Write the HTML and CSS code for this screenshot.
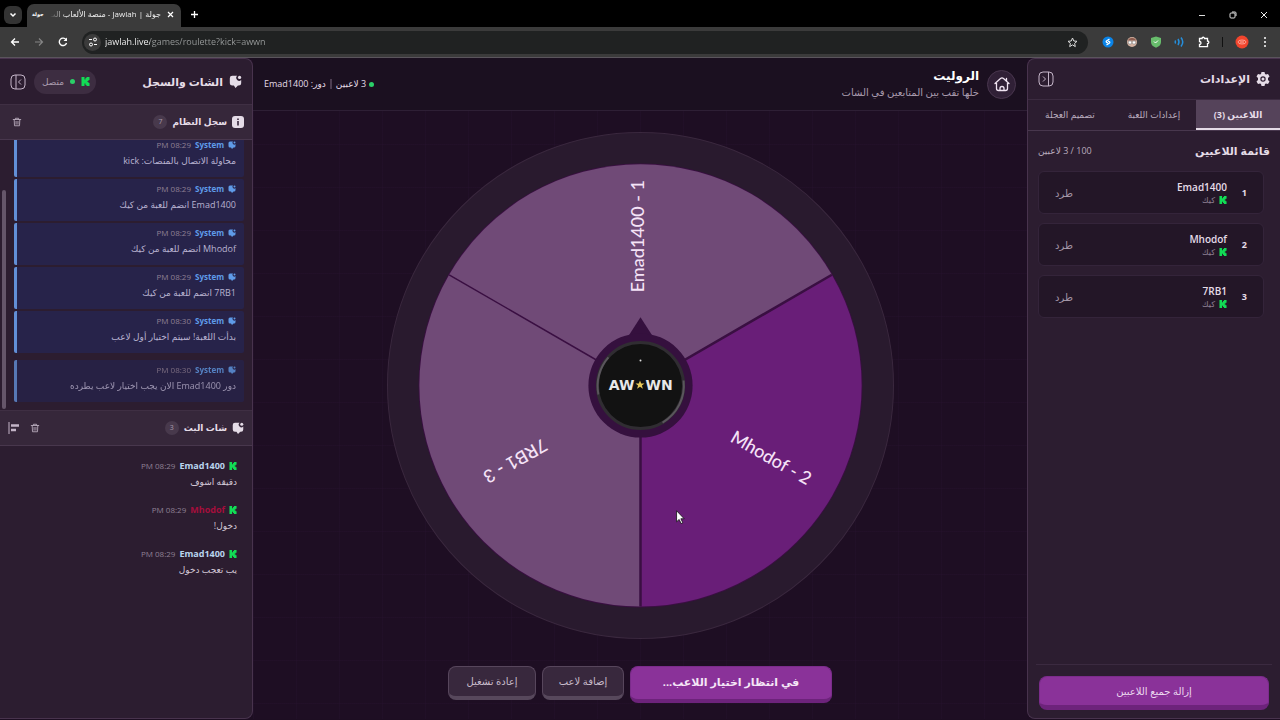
FILE: index.html
```html
<!DOCTYPE html>
<html lang="ar" dir="rtl">
<head>
	<meta charset="utf-8">
	<meta name="viewport" content="width=device-width, initial-scale=1.0">
	<title>جولة | Jawlah - منصة الألعاب</title>
	<link rel="stylesheet" href="styles.css">
</head>
<body>
	<svg class="defs" aria-hidden="true">
		<symbol id="kick" viewBox="0 0 9 9"><path fill="#12dc55" d="M.5 0h3v2.500h1V1h1V0h3v3h-1v1h-1v1h1v1h1v3h-3V8h-1V6.500h-1V9h-3z"/></symbol>
		<symbol id="chat" viewBox="0 0 16 16"><path fill="currentColor" d="M4 1h6a3.500 3.500 0 0 0 5 5v4a3 3 0 0 1-3 3h-1l-3 3-2-3H4a3 3 0 0 1-3-3V4a3 3 0 0 1 3-3z"/><circle cx="13" cy="3" r="2" fill="currentColor"/></symbol>
		<symbol id="trash" viewBox="0 0 16 16"><path fill="none" stroke="currentColor" stroke-width="1.4" stroke-linecap="round" stroke-linejoin="round" d="M2 4h12M5.500 4V2h5v2M3.500 4l.5 10h8l.5-10M6.500 7v4.500M9.500 7v4.500"/></symbol>
	</svg>

	<!-- browser -->
	<div class="browser" dir="ltr">
		<div class="tabbar">
			<button class="tab-search" aria-label="Search tabs"><svg width="8" height="8" viewBox="0 0 8 8"><path d="M1.500 2.500L4 5l2.500-2.500" fill="none" stroke="#fff" stroke-width="1.500"/></svg></button>
			<div class="tab">
				<span class="favicon">جولة</span>
				<span class="tab-title" dir="rtl">جولة | Jawlah - منصة الألعاب الت</span>
				<button class="plain" aria-label="Close tab"><svg width="7" height="7" viewBox="0 0 7 7"><path d="M1 1l5 5M6 1L1 6" stroke="#fff" stroke-width="1.200"/></svg></button>
			</div>
			<button class="plain new-tab" aria-label="New tab"><svg width="9" height="9" viewBox="0 0 9 9"><path d="M4.500 1v7M1 4.500h7" stroke="#fff" stroke-width="1.300"/></svg></button>
			<div class="window-buttons">
				<button class="plain" aria-label="Minimize"><svg width="8" height="8" viewBox="0 0 8 8"><path d="M1 4.500h6" stroke="#ddd"/></svg></button>
				<button class="plain" aria-label="Restore"><svg width="8" height="8" viewBox="0 0 8 8"><rect x="1" y="2" width="5" height="5" rx="1" fill="none" stroke="#ddd"/><path d="M3 1h3a1 1 0 0 1 1 1v3" fill="none" stroke="#ddd"/></svg></button>
				<button class="plain" aria-label="Close"><svg width="8" height="8" viewBox="0 0 8 8"><path d="M1 1l6 6M7 1L1 7" stroke="#eee"/></svg></button>
			</div>
		</div>
		<div class="toolbar">
			<button class="plain" aria-label="Back"><svg width="10" height="10" viewBox="0 0 10 10"><path d="M9 5H1.500M5 1.500L1.500 5 5 8.500" fill="none" stroke="#fff" stroke-width="1.300"/></svg></button>
			<button class="plain" aria-label="Forward"><svg width="10" height="10" viewBox="0 0 10 10"><path d="M1 5h7.500M5 1.500L8.500 5 5 8.500" fill="none" stroke="#858585" stroke-width="1.200"/></svg></button>
			<button class="plain" aria-label="Reload"><svg width="10" height="10" viewBox="0 0 10 10"><path d="M8.500 6A3.700 3.700 0 1 1 8 2.700" fill="none" stroke="#fff" stroke-width="1.400"/><path d="M9 .5V4H5.500z" fill="#fff"/></svg></button>
			<div class="address">
				<span class="site-info"><svg width="10" height="10" viewBox="0 0 10 10"><path d="M1 2.500h3M6 7.500h3" stroke="#fff" stroke-width="1.200"/><circle cx="7" cy="2.500" r="1.500" fill="none" stroke="#fff"/><circle cx="3" cy="7.500" r="1.500" fill="none" stroke="#fff"/></svg></span>
				<input class="url" type="text" aria-label="Address" value="jawlah.live/games/roulette?kick=awwn">
				<button class="plain" aria-label="Bookmark"><svg width="11" height="11" viewBox="0 0 11 11"><path d="M5.500 1l1.300 3 3.200.3-2.400 2.100.7 3.200-2.800-1.700-2.800 1.700.7-3.200L1 4.300 4.200 4z" fill="none" stroke="#ddd"/></svg></button>
			</div>
			<div class="extensions">
				<svg width="12" height="12" viewBox="0 0 12 12"><circle cx="6" cy="6" r="5.500" fill="#0a84e8"/><path d="M7.500 3L4.500 5c-1 1 .5 2 1.500 1.500M4.500 9l3-2c1-1-.5-2-1.500-1.500" fill="none" stroke="#fff" stroke-width="1.200"/></svg>
				<svg width="12" height="12" viewBox="0 0 12 12"><circle cx="6" cy="6" r="5" fill="#d5b3a2"/><path d="M1.500 4.500a5 5 0 0 1 9 0z" fill="#8d5d50"/><circle cx="4" cy="6.500" r="1.700" fill="#fff" stroke="#777" stroke-width=".6"/><circle cx="8" cy="6.500" r="1.700" fill="#fff" stroke="#777" stroke-width=".6"/></svg>
				<svg width="12" height="12" viewBox="0 0 12 12"><path d="M6 .5l5 1.500v4c0 3-2.500 4.800-5 5.700C3.500 10.800 1 9 1 6V2z" fill="#68bd6c"/><path d="M4 5.500L5.500 7 8 4.500" fill="none" stroke="#fff"/></svg>
				<svg width="12" height="12" viewBox="0 0 12 12"><path d="M1 4.500q1 1.500 0 3M4 3q2 3 0 6M7 1.500q3.500 4.500 0 9" fill="none" stroke="#258fdc" stroke-width="1.500"/></svg>
				<svg width="12" height="12" viewBox="0 0 12 12"><path d="M1.500 2.500H4a1.200 1.200 0 0 1 2.500 0h3V5a1.300 1.300 0 0 1 0 2.700v3h-8V8.500a1.500 1.500 0 0 0 0-3z" fill="none" stroke="#fff" stroke-width="1.300"/></svg>
				<span class="divider"></span>
				<svg width="14" height="14" viewBox="0 0 14 14"><circle cx="7" cy="7" r="6.500" fill="#f2452d"/><ellipse cx="7" cy="7" rx="4" ry="2" fill="none" stroke="#ffb6aa" stroke-width=".8"/><path d="M5 7h4" stroke="#ffcbc2" stroke-width=".8"/></svg>
				<button class="plain menu" aria-label="Menu"><svg width="4" height="12" viewBox="0 0 4 12"><g fill="#fff"><circle cx="2" cy="2" r="1"/><circle cx="2" cy="6" r="1"/><circle cx="2" cy="10" r="1"/></g></svg></button>
			</div>
		</div>
	</div>

	<div class="app">
		<!-- settings -->
		<aside class="panel settings">
			<div class="panel-head">
				<h2><svg width="14" height="14" viewBox="0 0 14 14"><path fill="currentColor" fill-rule="evenodd" d="M5.500 0h3l.5 2 1 .6 2-.6 1.500 2.500L12 6v2l1.500 1.500L12 12l-2-.6-1 .6-.5 2h-3L5 12l-1-.6-2 .6L.5 9.500 2 8V6L.5 4.500 2 2l2 .6L5 2zM7 4.300a2.700 2.700 0 1 0 0 5.400 2.700 2.700 0 0 0 0-5.400z"/><circle cx="7" cy="7" r="1.500" fill="currentColor"/></svg>الإعدادات</h2>
				<button class="plain" aria-label="طي الإعدادات"><svg width="16" height="16" viewBox="0 0 16 16" fill="none" stroke="#c4b5c8"><rect x="1" y="1" width="14" height="14" rx="4"/><path d="M10.500 1v14M5 5.500L7.500 8 5 10.500"/></svg></button>
			</div>
			<nav class="tabs">
				<button class="active">اللاعبين (3)</button>
				<button>إعدادات اللعبة</button>
				<button>تصميم العجلة</button>
			</nav>
			<div class="players">
				<div class="players-head">
					<h3>قائمة اللاعبين</h3>
					<span>100 / 3 لاعبين</span>
				</div>
				<ol>
					<li><b>1</b><div><strong>Emad1400</strong><small><svg><use href="#kick"/></svg>كيك</small></div><button class="plain">طرد</button></li>
					<li><b>2</b><div><strong>Mhodof</strong><small><svg><use href="#kick"/></svg>كيك</small></div><button class="plain">طرد</button></li>
					<li><b>3</b><div><strong>7RB1</strong><small><svg><use href="#kick"/></svg>كيك</small></div><button class="plain">طرد</button></li>
				</ol>
			</div>
			<div class="panel-foot">
				<button class="remove-all">إزالة جميع اللاعبين</button>
			</div>
		</aside>

		<!-- game -->
		<main class="game">
			<header class="game-head">
				<a class="home" href="#" aria-label="الرئيسية"><svg width="16" height="16" viewBox="0 0 16 16" fill="none" stroke="#f0e4f2" stroke-width="1.300" stroke-linejoin="round" stroke-linecap="round"><path d="M1 7.500L6.500 2.500q1.500-1.300 3 0L15 7.500M12.500 5V2.500M2.500 7v5.500a2 2 0 0 0 2 2h7a2 2 0 0 0 2-2V7M6 14.500v-2a2 2 0 0 1 4 0v2"/></svg></a>
				<div class="game-name">
					<h1>الروليت</h1>
					<p>خلها تقب بين المتابعين في الشات</p>
				</div>
				<div class="game-status">
					<span class="dot"></span>
					<span>3 لاعبين</span>
					<span class="bar"></span>
					<span>دور: Emad1400</span>
				</div>
			</header>
			<div class="stage">
				<svg class="wheel" viewBox="0 0 508 508" direction="ltr">
					<circle cx="254" cy="254" r="252.500" fill="#291a2e" stroke="#3a283e"/>
					<circle cx="254" cy="254" r="221.500" fill="#3a0f42"/>
					<path fill="#704a77" d="M254 254L63 143.500A220.500 220.500 0 0 1 445 143.500z"/>
					<path fill="#691e78" d="M254 254L445 143.500A220.500 220.500 0 0 1 254 474.500z"/>
					<path fill="#704a77" d="M254 254V474.500A220.500 220.500 0 0 1 63 143.500z"/>
					<g stroke="#3a0f42" stroke-width="2.500">
						<path d="M254 254L445 143.500M254 254V474.500"/>
						<path d="M254 254L63 143.500" stroke-width="1.500"/>
					</g>
					<g class="names">
						<text transform="translate(254 254) rotate(-90)" x="149" y="-1">Emad1400 - 1</text>
						<text transform="translate(254 254) rotate(30)" x="149" y="-1">Mhodof - 2</text>
						<text transform="translate(254 254) rotate(150)" x="146" y="-1">7RB1 - 3</text>
					</g>
					<path fill="#35103e" d="M254 186l13 20h-26z"/>
					<circle cx="254" cy="254" r="52" fill="#35103e"/>
					<circle cx="254" cy="254" r="43" fill="#121212" stroke="#302d32" stroke-width="3"/>
					<path d="M222 226A43 43 0 0 0 212 263M297 249A43 43 0 0 1 276 291" fill="none" stroke="#5a565c" stroke-width="2"/>
					<circle cx="254" cy="229" r="1" fill="#ddd"/>
					<g class="logo">
						<text x="248" y="258" text-anchor="end">AW</text>
						<text x="259" y="258">WN</text>
					</g>
					<path fill="#e6c85a" d="M253.500 249l1.200 3h3.300l-2.600 2 1 3.200-2.900-2-2.900 2 1-3.200-2.600-2h3.300z"/>
					<path fill="#fff" stroke="#111" stroke-width=".8" d="M290 379v11l2.600-2.300 1.900 4.100 1.700-.8-1.900-4h3.300z"/>
				</svg>
			</div>
			<div class="actions">
				<button class="primary">في انتظار اختيار اللاعب...</button>
				<button>إضافة لاعب</button>
				<button>إعادة تشغيل</button>
			</div>
		</main>

		<!-- chat and log -->
		<aside class="panel chat">
			<div class="panel-head">
				<h2><svg width="13" height="13"><use href="#chat"/></svg>الشات والسجل</h2>
				<span class="connected"><svg width="9" height="9"><use href="#kick"/></svg><i class="dot"></i>متصل</span>
				<button class="plain" aria-label="طي الشات"><svg width="16" height="16" viewBox="0 0 16 16" fill="none" stroke="#c4b5c8"><rect x="1" y="1" width="14" height="14" rx="4"/><path d="M6 1v14M11 5.500L8.500 8l2.500 2.500"/></svg></button>
			</div>
			<div class="section-head">
				<svg width="12" height="12" viewBox="0 0 12 12"><rect width="12" height="12" rx="3" fill="#e5dce7"/><path d="M6 2.500v1.500M6 5v4.500" stroke="#35263a" stroke-width="1.600"/></svg>
				<h3>سجل النظام</h3>
				<span class="count">7</span>
				<div class="tools">
					<button class="plain" aria-label="مسح السجل"><svg width="10" height="10"><use href="#trash"/></svg></button>
				</div>
			</div>
			<div class="log">
				<article><header><svg><use href="#chat"/></svg><b>System</b><time>08:29 PM</time></header><p>محاولة الاتصال بالمنصات: kick</p></article>
				<article><header><svg><use href="#chat"/></svg><b>System</b><time>08:29 PM</time></header><p>Emad1400 انضم للعبة من كيك</p></article>
				<article><header><svg><use href="#chat"/></svg><b>System</b><time>08:29 PM</time></header><p>Mhodof انضم للعبة من كيك</p></article>
				<article><header><svg><use href="#chat"/></svg><b>System</b><time>08:29 PM</time></header><p>7RB1 انضم للعبة من كيك</p></article>
				<article><header><svg><use href="#chat"/></svg><b>System</b><time>08:30 PM</time></header><p>بدأت اللعبة! سيتم اختيار أول لاعب</p></article>
				<article class="entering"><header><svg><use href="#chat"/></svg><b>System</b><time>08:30 PM</time></header><p>دور Emad1400 الان يجب اختيار لاعب يطرده</p></article>
				<div class="scroll-thumb"></div>
			</div>
			<div class="section-head">
				<svg width="12" height="12"><use href="#chat"/></svg>
				<h3>شات البث</h3>
				<span class="count">3</span>
				<div class="tools">
					<button class="plain" aria-label="مسح الشات"><svg width="10" height="10"><use href="#trash"/></svg></button>
					<button class="plain" aria-label="محاذاة"><svg width="12" height="12" viewBox="0 0 12 12"><path d="M1 0v12" stroke="#c4b5c8"/><path d="M3 3.500h8M3 8h5" stroke="#c4b5c8" stroke-width="2.500"/></svg></button>
				</div>
			</div>
			<div class="messages">
				<article><header><svg><use href="#kick"/></svg><b>Emad1400</b><time>08:29 PM</time></header><p>دقيقه اشوف</p></article>
				<article><header><svg><use href="#kick"/></svg><b class="red">Mhodof</b><time>08:29 PM</time></header><p>دخول!</p></article>
				<article><header><svg><use href="#kick"/></svg><b>Emad1400</b><time>08:29 PM</time></header><p>يب تعجب دخول</p></article>
			</div>
		</aside>
	</div>
</body>
</html>
```

FILE: styles.css
```css
* {
	box-sizing: border-box;
}

body {
	margin: 0;
	height: 100vh;
	display: flex;
	flex-direction: column;
	overflow: hidden;
	background: #1d0e22;
	color: #e5dce7;
	font: 10px/16px "Open Sans", "DejaVu Sans", sans-serif;
}

h1, h2, h3, p, ol {
	margin: 0;
	padding: 0;
}

button {
	font: inherit;
	color: inherit;
	cursor: pointer;
}

svg {
	display: block;
	flex: none;
}

.defs {
	position: absolute;
	width: 0;
	height: 0;
}

.plain {
	display: flex;
	align-items: center;
	padding: 0;
	border: 0;
	background: none;
}

.dot {
	width: 5px;
	height: 5px;
	border-radius: 50%;
	background: #2bcf68;
}

/* browser */
.tabbar {
	display: flex;
	align-items: center;
	height: 27px;
	padding: 2px 12px 0 4px;
	background: #000;
}

.tab-search {
	display: flex;
	align-items: center;
	justify-content: center;
	width: 18px;
	height: 18px;
	margin-right: 5px;
	padding: 0;
	border: 0;
	border-radius: 6px;
	background: #333;
}

.tab {
	display: flex;
	align-items: center;
	align-self: flex-end;
	gap: 6px;
	width: 154px;
	height: 23px;
	padding: 0 7px 3px 5px;
	border-radius: 7px 7px 0 0;
	background: #3b3b3b;
}

.favicon {
	flex: none;
	font-size: 5px;
	font-weight: bold;
	color: #fff;
}

.tab-title {
	flex: 1;
	overflow: hidden;
	white-space: nowrap;
	font-size: 8px;
	color: #eee;
	mask-image: linear-gradient(to right, transparent, #000 16px);
}

.new-tab {
	margin-left: 9px;
}

.window-buttons {
	display: flex;
	gap: 23px;
	margin-left: auto;
}

.toolbar {
	display: flex;
	align-items: center;
	gap: 14px;
	height: 31px;
	padding: 0 13px 0 10px;
	background: #3b3b3b;
	border-bottom: 1px solid #5a555c;
}

.address {
	flex: 1;
	display: flex;
	align-items: center;
	gap: 4px;
	height: 23px;
	padding: 0 10px 0 2px;
	border-radius: 12px;
	background: #202222;
}

.site-info {
	display: flex;
	align-items: center;
	justify-content: center;
	width: 17px;
	height: 17px;
	border-radius: 50%;
	background: #3b3b3b;
}

/* host in white, path in grey */
.url {
	flex: 1;
	min-width: 0;
	padding: 0;
	border: 0;
	outline: 0;
	font: 9px/16px "Open Sans", sans-serif;
	color: transparent;
	background: linear-gradient(to right, #fff 45px, #9a9d9d 45px);
	-webkit-background-clip: text;
	background-clip: text;
}

.extensions {
	display: flex;
	align-items: center;
	gap: 12px;
}

.extensions .menu {
	margin-left: 2px;
}

.divider {
	width: 1px;
	height: 10px;
	background: #111;
}

/* layout */
.app {
	flex: 1;
	min-height: 0;
	display: flex;
	padding-bottom: 1px;
}

.panel {
	flex: none;
	width: 253px;
	display: flex;
	flex-direction: column;
	border: 1px solid #48334d;
	background: #2c1d30;
}

.settings {
	border-right: 0;
	border-radius: 8px 0 0 8px;
}

.chat {
	border-left: 0;
	border-radius: 0 8px 8px 0;
}

.panel-head {
	display: flex;
	align-items: center;
	gap: 8px;
	padding: 0 10px;
}

.panel-head h2 {
	display: flex;
	align-items: center;
	gap: 6px;
	margin-left: auto;
	font-size: 11px;
}

/* settings */
.settings .panel-head {
	height: 40px;
}

.tabs {
	display: flex;
	height: 32px;
	border-top: 1px solid #3b2b40;
	border-bottom: 1px solid #48374d;
}

.tabs button {
	flex: 1;
	padding: 0;
	border: 0;
	background: none;
	color: #b9abbd;
	font-size: 9px;
	white-space: nowrap;
}

.tabs .active {
	background: #55435a;
	color: #e5dce7;
	box-shadow: inset 0 -2px #e5dce7;
	font-weight: bold;
}

.players {
	flex: 1;
	padding: 12px 10px;
}

.players-head {
	display: flex;
	align-items: center;
	justify-content: space-between;
	height: 16px;
	margin-bottom: 12px;
	font-size: 9px;
	color: #b9abbd;
}

.players-head h3 {
	font-size: 11px;
	color: #e5dce7;
}

.players ol {
	display: flex;
	flex-direction: column;
	gap: 9px;
	margin-right: 6px;
	list-style: none;
}

.players li {
	display: flex;
	align-items: center;
	height: 43px;
	padding: 0 16px;
	border: 1px solid #34243a;
	border-radius: 6px;
	background: #231627;
}

.players li b {
	width: 20px;
	font-size: 9px;
}

.players li strong {
	display: block;
	font-size: 10px;
	line-height: 14px;
	font-weight: 600;
}

.players li small {
	display: flex;
	align-items: center;
	gap: 4px;
	font-size: 8px;
	line-height: 12px;
	color: #8f8094;
}

.players li small svg {
	width: 8px;
	height: 8px;
}

.players li button {
	margin-right: auto;
	color: #a396a8;
}

.panel-foot {
	margin: 0 8px;
	padding: 11px 3px 8px;
	border-top: 1px solid #3b2a40;
}

.remove-all {
	width: 100%;
	height: 34px;
	padding: 0;
	border: 1px solid #7b2c8b;
	border-bottom: 5px solid #6d237b;
	border-radius: 8px;
	background: #8a3299;
	color: #ecd9f0;
}

/* game */
.game {
	flex: 1;
	min-width: 0;
	display: flex;
	flex-direction: column;
	background-color: #1e0e23;
	background-image: linear-gradient(rgba(90, 50, 110, .06) 1px, transparent 1px), linear-gradient(90deg, rgba(90, 50, 110, .06) 1px, transparent 1px);
	background-size: 43px 43px;
}

.game-head {
	display: flex;
	align-items: center;
	gap: 8px;
	height: 53px;
	padding: 0 11px;
	border-bottom: 1px solid #2e1f35;
	background: #1b1020;
}

.home {
	display: flex;
	align-items: center;
	justify-content: center;
	width: 29px;
	height: 29px;
	border: 1px solid #49364e;
	border-radius: 50%;
	background: #302036;
}

.game-name h1 {
	font-size: 12px;
	line-height: 16px;
	color: #fff;
}

.game-name p {
	font-size: 10px;
	color: #a99bad;
}

.game-status {
	display: flex;
	align-items: center;
	gap: 3px;
	margin-right: auto;
	font-size: 9px;
}

.game-status .bar {
	width: 2px;
	height: 10px;
	margin: 0 1px;
	background: #4c3d51;
}

.stage {
	flex: 1;
	min-height: 0;
	display: flex;
	justify-content: center;
	padding: 20px 0 26px;
}

.wheel {
	height: 100%;
	max-width: 100%;
}

.names text {
	font: 500 18px Lato, sans-serif;
	fill: #f5e3f7;
	text-anchor: middle;
	dominant-baseline: middle;
}

.logo text {
	font: bold 14px "DejaVu Sans", sans-serif;
	fill: #e8e8e8;
}

.actions {
	display: flex;
	justify-content: center;
	gap: 6px;
	padding-bottom: 16px;
}

.actions button {
	width: 82px;
	height: 34px;
	padding: 0 0 2px;
	border: 1px solid #57465c;
	border-bottom: 4px solid #57485c;
	border-radius: 8px;
	background: #38283d;
	color: #c8bccb;
	white-space: nowrap;
}

.actions button:last-child {
	width: 88px;
}

.actions .primary {
	width: 202px;
	height: 37px;
	border-color: #7b2c8b;
	border-bottom-color: #6d237b;
	background: #8a3299;
	color: #f5e6f7;
	font-size: 11px;
	font-weight: bold;
}

/* chat */
.chat .panel-head {
	height: 45px;
}

.chat .panel-head h2 {
	margin-left: 0;
}

.connected {
	display: flex;
	align-items: center;
	gap: 6px;
	height: 24px;
	margin-right: auto;
	padding: 0 6px 0 8px;
	border-radius: 12px;
	background: #3d2d41;
	color: #a99bad;
	font-size: 9px;
}

.section-head {
	display: flex;
	align-items: center;
	gap: 5px;
	flex: none;
	height: 36px;
	padding: 0 8px;
	border-top: 1px solid #3f2f43;
	border-bottom: 1px solid #48374d;
	background: #36273a;
}

.section-head h3 {
	font-size: 9px;
	white-space: nowrap;
}

.count {
	flex: none;
	width: 14px;
	height: 14px;
	border-radius: 50%;
	background: #48394c;
	color: #a99bad;
	font-size: 7px;
	line-height: 14px;
	text-align: center;
}

.tools {
	display: flex;
	gap: 10px;
	margin-right: auto;
	color: #b9abbd;
}

.tools button:only-child {
	margin-left: 4px;
}

.log {
	position: relative;
	flex: 0 0 41%;
	display: flex;
	flex-direction: column;
	justify-content: flex-end;
	gap: 2px;
	padding: 0 8px 8px 14px;
	overflow: hidden;
}

.log article {
	flex: none;
	height: 42px;
	padding: 2px 8px 0;
	border-left: 3px solid #628fd6;
	border-radius: 2px;
	background: #27234a;
}

.log .entering {
	margin-top: 5px;
	opacity: .8;
}

.scroll-thumb {
	position: absolute;
	left: 2px;
	bottom: 1px;
	width: 4px;
	height: 219px;
	border-radius: 2px;
	background: #65566a;
}

article header {
	display: flex;
	align-items: center;
	gap: 4px;
	font-size: 9px;
}

article header svg {
	width: 8px;
	height: 8px;
	color: #5f9be8;
}

article header b {
	color: #b9d4ee;
}

.log article header b {
	font-size: 8px;
	color: #5f9be8;
}

article time {
	font-size: 8px;
	color: #8f8094;
}

article p {
	font-size: 9px;
	white-space: nowrap;
	color: #d3c8d6;
}

.log article p {
	color: #b8b2d0;
}

article .red {
	color: #a50e3c;
}

.messages {
	flex: 1;
	display: flex;
	flex-direction: column;
	gap: 12px;
	padding: 12px 15px;
}
```
